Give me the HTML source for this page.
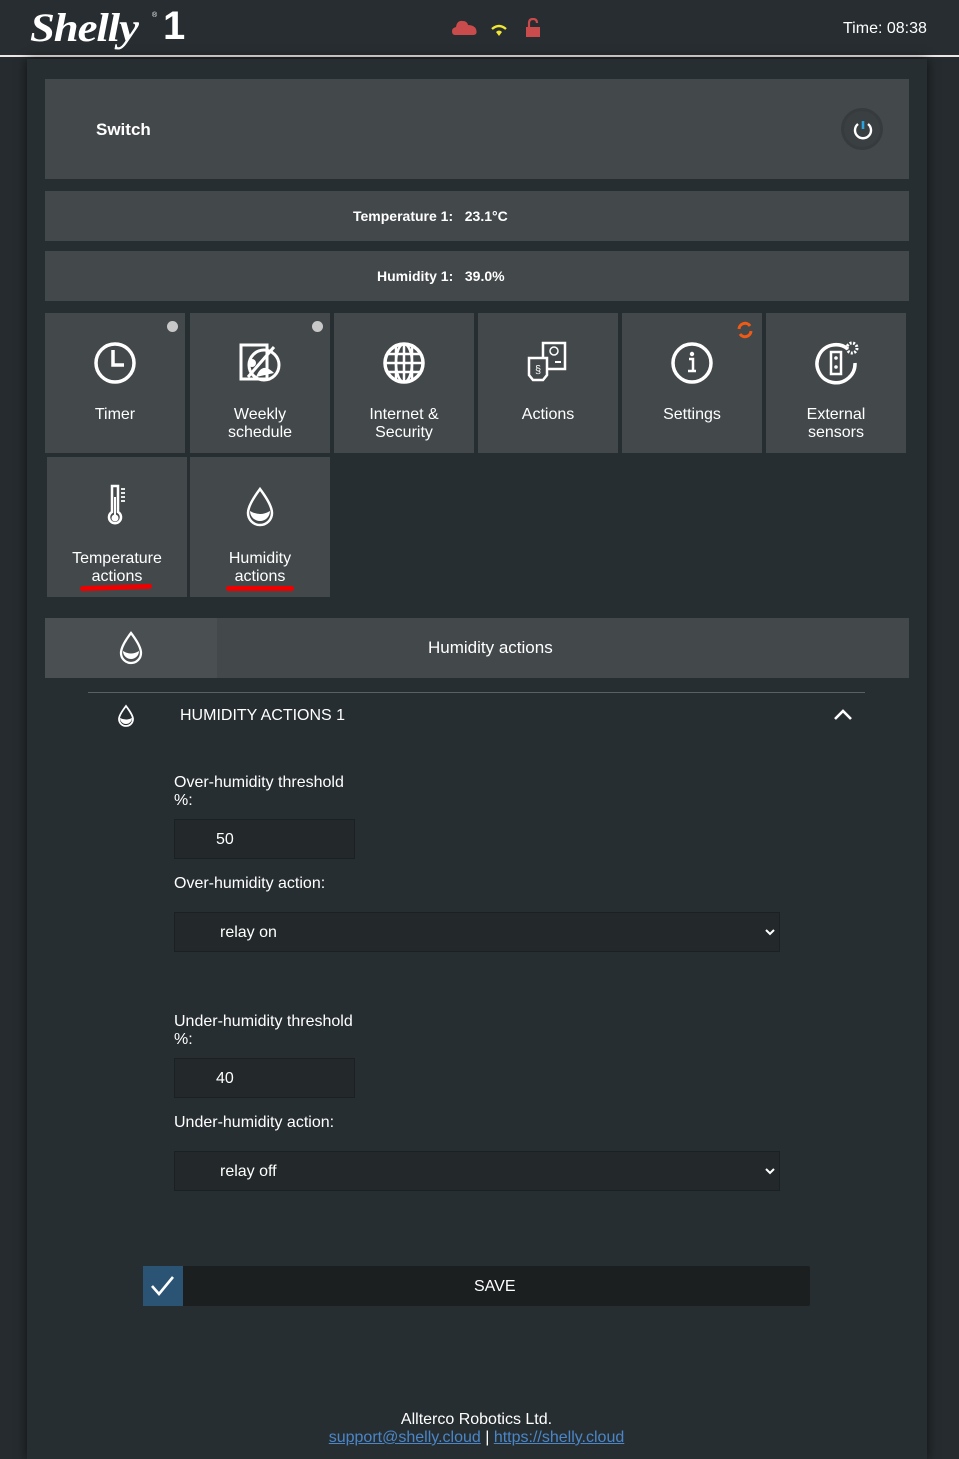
<!DOCTYPE html>
<html><head><meta charset="utf-8">
<style>
*{box-sizing:border-box;margin:0;padding:0}
body{width:959px;height:1448px;background:#252b2e;font-family:"Liberation Sans",sans-serif;color:#fff;position:relative;overflow:hidden}
.a{position:absolute}
.hdr{left:0;top:0;width:959px;height:57px;background:#272d30;border-bottom:2px solid #e8e8e8}
.cont{left:27px;top:59px;width:900px;height:1400px;background:#272e31;box-shadow:0 0 10px rgba(0,0,0,.6)}
.panel{background:#43484b}
.tile{background:#43484b;width:140px;height:140px;text-align:center;font-size:16px;line-height:18px}
.tile svg{position:absolute;left:50%;top:26px;margin-left:-24px}
.tile span{position:absolute;left:0;right:0;top:93px}
.inp{background:#23292b;border:1px solid #1b2022;font-size:16px}
.lbl{font-size:16px;line-height:18px}
</style></head><body>
<div class="a hdr">
  <div class="a" style="left:30px;top:4px;font-family:'Liberation Serif',serif;font-style:italic;font-weight:bold;font-size:40px;letter-spacing:-1px;transform:scaleX(1.12);transform-origin:left">Shelly</div>
  <div class="a" style="left:152px;top:12px;font-size:7px">®</div>
  <div class="a" style="left:163px;top:4px;font-size:40px;font-weight:bold;line-height:44px">1</div>
  <svg class="a" style="left:452px;top:19px" width="26" height="18"><path d="M3 16 Q0 16 0 12 Q0 9 4 8 Q5 1 11 2 Q15 2 16 6 Q22 6 24 10 Q26 16 21 16Z" fill="#c94b4b"/></svg>
  <svg class="a" style="left:491px;top:24px" width="16" height="12"><path d="M1 5 Q8 -1 15 5" stroke="#f2e634" stroke-width="2.4" fill="none"/><path d="M5 8 L8 12 L11 8 Q8 5 5 8Z" fill="#f2e634"/></svg>
  <svg class="a" style="left:525px;top:18px" width="16" height="20"><path d="M4 9 V5 Q4 1 8 1 Q12 1 12 5" stroke="#c94b4b" stroke-width="2.2" fill="none"/><rect x="1" y="9" width="14" height="10" fill="#c94b4b"/></svg>
  <div class="a" style="left:843px;top:20px;font-size:16px">Time: 08:38</div>
</div>
<div class="a cont"></div>
<div class="a panel" style="left:45px;top:79px;width:864px;height:100px"><div class="a" style="left:51px;top:41px;font-weight:bold;font-size:17px">Switch</div>
<div class="a" style="left:796px;top:29px;width:42px;height:42px;border-radius:50%;background:#3a3f42;border:3px solid #363b3e"></div>
<svg class="a" style="left:807px;top:40px" width="22" height="22"><path d="M6 5 A8 8 0 1 0 16 5" stroke="#fff" stroke-width="2.4" fill="none"/><path d="M11 2 V10" stroke="#2aa3e0" stroke-width="2.6"/></svg></div>
<div class="a panel" style="left:45px;top:191px;width:864px;height:50px;font-weight:bold;font-size:14px"><div class="a" style="left:308px;top:17px">Temperature 1:&nbsp;&nbsp; 23.1°C</div></div>
<div class="a panel" style="left:45px;top:251px;width:864px;height:50px;font-weight:bold;font-size:14px"><div class="a" style="left:332px;top:17px">Humidity 1:&nbsp;&nbsp; 39.0%</div></div>

<div class="a tile" style="left:45px;top:313px"><div class="a" style="left:122px;top:8px;width:11px;height:11px;border-radius:50%;background:#c8c8c8"></div>
<svg width="48" height="48"><circle cx="24" cy="24" r="19" stroke="#fff" stroke-width="3.5" fill="none"/><path d="M22 11 V26 H33" stroke="#fff" stroke-width="3.5" fill="none"/></svg><span>Timer</span></div>
<div class="a tile" style="left:190px;top:313px"><div class="a" style="left:122px;top:8px;width:11px;height:11px;border-radius:50%;background:#c8c8c8"></div>
<svg width="48" height="48"><rect x="5" y="6" width="26" height="34" stroke="#fff" stroke-width="3" fill="none"/><circle cx="28" cy="26" r="15" stroke="#fff" stroke-width="3" fill="none"/><path d="M12 38 L38 8" stroke="#fff" stroke-width="3"/><path d="M20 38 Q26 22 38 34Z" fill="#fff"/><circle cx="16" cy="24" r="4" fill="#fff"/></svg><span>Weekly<br>schedule</span></div>
<div class="a tile" style="left:334px;top:313px"><svg width="48" height="48"><circle cx="24" cy="24" r="19" stroke="#fff" stroke-width="3.5" fill="none"/><ellipse cx="24" cy="24" rx="8" ry="19" stroke="#fff" stroke-width="2.5" fill="none"/><path d="M24 5 V43 M5 24 H43 M8 15 H40 M8 33 H40 M16 7 V41 M32 7 V41" stroke="#fff" stroke-width="2.5"/></svg><span>Internet &amp;<br>Security</span></div>
<div class="a tile" style="left:478px;top:313px"><svg width="48" height="48"><rect x="19" y="4" width="22" height="26" stroke="#fff" stroke-width="2.5" fill="#43484b"/><circle cx="30" cy="12" r="4" stroke="#fff" stroke-width="1.5" fill="none"/><path d="M31 23 H37" stroke="#fff" stroke-width="2"/><path d="M5 19 H23 V36 L19 41 H9 L5 36Z" stroke="#fff" stroke-width="2.5" fill="#43484b"/><text x="14" y="34" font-size="11" fill="#fff" text-anchor="middle" font-family="Liberation Sans">§</text></svg><span>Actions</span></div>
<div class="a tile" style="left:622px;top:313px"><svg class="a" style="left:114px;top:8px;margin:0" width="18" height="18"><path d="M3 8 A6 6 0 0 1 14 5 M15 10 A6 6 0 0 1 4 13" stroke="#f05a14" stroke-width="3" fill="none"/></svg>
<svg width="48" height="48"><circle cx="24" cy="24" r="19" stroke="#fff" stroke-width="3.5" fill="none"/><circle cx="24" cy="15" r="2.2" fill="#fff"/><path d="M21 20 H25 V32 M20 32 H28" stroke="#fff" stroke-width="2.5" fill="none"/></svg><span>Settings</span></div>
<div class="a tile" style="left:766px;top:313px"><svg width="48" height="48"><path d="M36 10 A19 19 0 1 0 43 24" stroke="#fff" stroke-width="3.5" fill="none"/><rect x="19" y="13" width="10" height="22" stroke="#fff" stroke-width="2.5" fill="none"/><circle cx="24" cy="19" r="1.8" fill="#fff"/><circle cx="24" cy="28" r="1.8" fill="#fff"/><circle cx="40" cy="9" r="5" stroke="#fff" stroke-width="3" stroke-dasharray="2 1.5" fill="none"/></svg><span>External<br>sensors</span></div>
<div class="a tile" style="left:47px;top:457px"><svg width="48" height="48"><path d="M19 3 V29 A6 6 0 1 0 25 29 V3Z" stroke="#fff" stroke-width="2.5" fill="none"/><circle cx="22" cy="35" r="3.5" fill="#fff"/><path d="M22 14 V32" stroke="#fff" stroke-width="2"/><path d="M28 6 H32 M28 10 H32 M28 14 H32 M28 18 H32" stroke="#fff" stroke-width="1.8"/></svg><span>Temperature<br>actions</span>
<div class="a" style="left:33px;top:128px;width:72px;height:5px;background:#e00;border-radius:3px;transform:rotate(-2deg)"></div></div>
<div class="a tile" style="left:190px;top:457px"><svg width="48" height="48"><path d="M24 6 Q36 22 36 30 A12 12 0 0 1 12 30 Q12 22 24 6Z" stroke="#fff" stroke-width="2.5" fill="none"/><path d="M14 28 Q24 34 34 28 A10 10 0 0 1 14 28Z" fill="#fff"/></svg><span>Humidity<br>actions</span>
<div class="a" style="left:36px;top:129px;width:68px;height:5px;background:#e00;border-radius:3px"></div></div>

<div class="a panel" style="left:45px;top:618px;width:864px;height:60px"><div class="a" style="left:0;top:0;width:172px;height:60px;background:#4a4f52"></div>
<svg class="a" style="left:72px;top:12px" width="28" height="36"><path d="M14 3 Q24 16 24 23 A10 10 0 0 1 4 23 Q4 16 14 3Z" stroke="#fff" stroke-width="2.3" fill="none"/><path d="M6 21 Q14 26 22 21 A8 8 0 0 1 6 21Z" fill="#fff"/></svg>
<div class="a" style="left:383px;top:20px;font-size:17px">Humidity actions</div></div>
<div class="a" style="left:88px;top:692px;width:777px;height:1px;background:#5a6064"></div>
<svg class="a" style="left:116px;top:704px" width="20" height="24"><path d="M10 2 Q17 11 17 15 A7 7 0 0 1 3 15 Q3 11 10 2Z" stroke="#fff" stroke-width="1.8" fill="none"/><path d="M4 14 Q10 17 16 14 A6 6 0 0 1 4 14Z" fill="#fff"/></svg>
<div class="a" style="left:180px;top:707px;font-size:16px">HUMIDITY ACTIONS 1</div>
<svg class="a" style="left:833px;top:708px" width="20" height="14"><path d="M2 11 L10 3 L18 11" stroke="#fff" stroke-width="2.6" fill="none"/></svg>

<div class="a lbl" style="left:174px;top:774px">Over-humidity threshold<br>%:</div>
<div class="a inp" style="left:174px;top:819px;width:181px;height:40px"><span class="a" style="left:41px;top:11px">50</span></div>
<div class="a lbl" style="left:174px;top:875px">Over-humidity action:</div>
<div class="a inp" style="left:174px;top:912px;width:606px;height:40px"><span class="a" style="left:45px;top:11px">relay on</span><svg class="a" style="left:590px;top:15px" width="10" height="8"><path d="M1 2 L5 6 L9 2" stroke="#fff" stroke-width="2" fill="none"/></svg></div>
<div class="a lbl" style="left:174px;top:1013px">Under-humidity threshold<br>%:</div>
<div class="a inp" style="left:174px;top:1058px;width:181px;height:40px"><span class="a" style="left:41px;top:11px">40</span></div>
<div class="a lbl" style="left:174px;top:1114px">Under-humidity action:</div>
<div class="a inp" style="left:174px;top:1151px;width:606px;height:40px"><span class="a" style="left:45px;top:11px">relay off</span><svg class="a" style="left:590px;top:15px" width="10" height="8"><path d="M1 2 L5 6 L9 2" stroke="#fff" stroke-width="2" fill="none"/></svg></div>

<div class="a" style="left:143px;top:1266px;width:667px;height:40px;background:#1b1f20;border-radius:2px"></div>
<div class="a" style="left:143px;top:1266px;width:40px;height:40px;background:#2b5474"></div>
<svg class="a" style="left:150px;top:1274px" width="26" height="24"><path d="M2 12 L9 20 L23 3" stroke="#fff" stroke-width="2.6" fill="none"/></svg>
<div class="a" style="left:474px;top:1278px;font-size:16px">SAVE</div>
<div class="a" style="left:0;width:953px;top:1411px;text-align:center;font-size:16px;line-height:18px">Allterco Robotics Ltd.<br><span style="color:#4a86c8;text-decoration:underline">support@shelly.cloud</span> | <span style="color:#4a86c8;text-decoration:underline">https://shelly.cloud</span></div>
</body></html>
